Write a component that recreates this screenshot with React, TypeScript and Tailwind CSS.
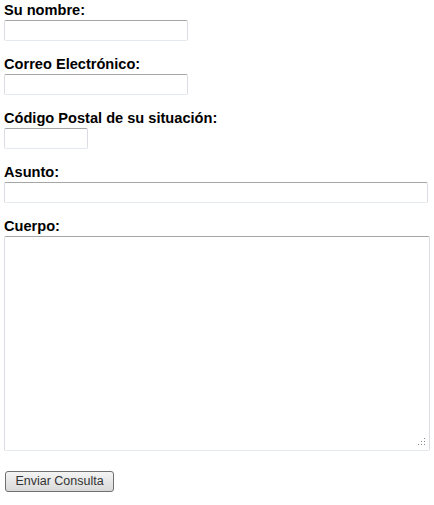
import React from "react";

const inputCls =
  "block h-[21px] rounded-[2px] border border-[#dcdce2] border-t-[#a6a6a6] border-b-[#e3e9ef] bg-white outline-none";

function Label({ children }: { children: React.ReactNode }) {
  return (
    <div className="h-[16px] pt-[1px] text-[14.6px] leading-[16px] font-bold text-black whitespace-nowrap">
      {children}
    </div>
  );
}

export default function App() {
  return (
    <div
      className="w-[434px] h-[505px] bg-white px-[4px] pt-[1px]"
      style={{ fontFamily: '"Liberation Sans", Arial, sans-serif' }}
    >
      <div className="mb-[14px]">
        <Label>Su nombre:</Label>
        <input className={`${inputCls} mt-[3px] w-[184px]`} />
      </div>
      <div className="mb-[14px]">
        <Label>Correo Electrónico:</Label>
        <input className={`${inputCls} mt-[3px] w-[184px]`} />
      </div>
      <div className="mb-[14px]">
        <Label>Código Postal de su situación:</Label>
        <input className={`${inputCls} mt-[3px] w-[84px]`} />
      </div>
      <div className="mb-[14px]">
        <Label>Asunto:</Label>
        <input className={`${inputCls} mt-[3px] w-[424px]`} />
      </div>
      <div>
        <Label>Cuerpo:</Label>
        <div className="relative mt-[3px] w-[426px] h-[215px]">
          <textarea className="block w-full h-full resize-none rounded-[2px] border border-[#dcdce2] border-t-[#a6a6a6] border-b-[#e3e9ef] bg-white outline-none" />
          <div className="absolute right-[5px] bottom-[6px] grid grid-cols-3 gap-[2px]">
            <span className="w-[1px] h-[1px]" />
            <span className="w-[1px] h-[1px]" />
            <span className="w-[1px] h-[1px] bg-[#888]" />
            <span className="w-[1px] h-[1px]" />
            <span className="w-[1px] h-[1px] bg-[#888]" />
            <span className="w-[1px] h-[1px] bg-[#888]" />
            <span className="w-[1px] h-[1px] bg-[#888]" />
            <span className="w-[1px] h-[1px] bg-[#888]" />
            <span className="w-[1px] h-[1px] bg-[#888]" />
          </div>
        </div>
      </div>
      <button className="mt-[20px] ml-[1px] flex h-[21px] w-[109px] items-center justify-center rounded-[3px] border border-[#707070] bg-gradient-to-b from-[#f4f4f4] to-[#d9d9d9] text-[12.5px] leading-none text-[#333]">
        Enviar Consulta
      </button>
    </div>
  );
}
